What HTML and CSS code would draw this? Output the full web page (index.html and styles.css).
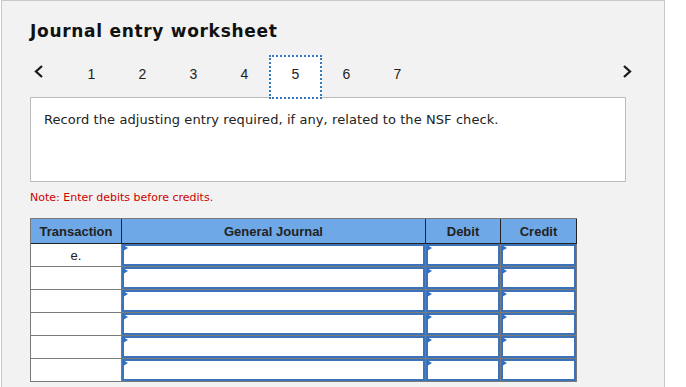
FILE: index.html
```html
<!DOCTYPE html>
<html lang="en">

<head>
    <meta charset="UTF-8">
    <title>Journal entry worksheet</title>
    <link rel="stylesheet" href="styles.css">
</head>

<body>

    <div class="panel">
        <h2 class="title">Journal entry worksheet</h2>

        <div class="nav">
            <span class="arrow prev">
                <svg width="10" height="13" viewBox="0 0 10 13"><polyline points="8,1 2,6.5 8,12" fill="none" stroke="#1a1a1a" stroke-width="2.3"/></svg>
            </span>
            <span class="tab">1</span>
            <span class="tab">2</span>
            <span class="tab">3</span>
            <span class="tab">4</span>
            <span class="tab active">5</span>
            <span class="tab">6</span>
            <span class="tab">7</span>
            <span class="arrow next">
                <svg width="10" height="13" viewBox="0 0 10 13"><polyline points="2,1 8,6.5 2,12" fill="none" stroke="#1a1a1a" stroke-width="2.3"/></svg>
            </span>
        </div>

        <div class="question">
            Record the adjusting entry required, if any, related to the NSF check.
        </div>

        <div class="note">Note: Enter debits before credits.</div>

        <table class="journal">
            <thead>
                <tr>
                    <th class="col-trans">Transaction</th>
                    <th class="col-gj">General Journal</th>
                    <th class="col-num">Debit</th>
                    <th class="col-num2">Credit</th>
                </tr>
            </thead>
            <tbody id="rows"></tbody>
        </table>
    </div>

    <script>
        const rows = ['e.', '', '', '', '', ''];
        const body = document.getElementById('rows');

        rows.forEach(label => {
            const tr = document.createElement('tr');
            tr.innerHTML = `
                <td class="trans">${label}</td>
                <td class="entry"><div class="field"></div><span class="marker"></span></td>
                <td class="entry"><div class="field"></div><span class="marker"></span></td>
                <td class="entry"><div class="field"></div><span class="marker"></span></td>
            `;
            body.appendChild(tr);
        });
    </script>

</body>

</html>
```

FILE: styles.css
```css
html, body {
    margin: 0;
    overflow: hidden;
    background: #fff;
}

.panel {
    margin-left: 1px;
    width: 596px;
    height: 366px;
    padding: 20px 38px 0 28px;
    background: #f2f2f2;
    border: 1px solid #c9c9c9;
    border-bottom: none;
}

.title {
    margin: 0;
    font-family: "DejaVu Sans", Verdana, sans-serif;
    font-size: 17px;
    line-height: 21px;
    letter-spacing: 0.7px;
    font-weight: bold;
    color: #111;
}

/* Step navigation */
.nav {
    display: flex;
    align-items: flex-start;
    height: 44px;
    margin-top: 13px;
    margin-bottom: -2px;
}

.arrow {
    display: flex;
    height: 44px;
    padding-top: 10px;
    box-sizing: border-box;
}

.prev {
    width: 36px;
    padding-left: 4px;
}

.next {
    margin-left: auto;
    margin-right: -6px;
}

.tab {
    width: 51px;
    height: 44px;
    box-sizing: border-box;
    border: 2px solid transparent;
    padding-top: 9px;
    text-align: center;
    font-family: "Liberation Sans", Arial, sans-serif;
    font-size: 14px;
    line-height: 16px;
    color: #222;
}

.tab.active {
    position: relative;
    width: 53px;
    margin: 0 -1px;
    background: #fff;
    border: 2px dotted #3a74c4;
}

/* Question box */
.question {
    height: 69px;
    padding: 14px 13px 0 13px;
    background: #fff;
    border: 1px solid #bdbdbd;
    font-family: "DejaVu Sans", Verdana, sans-serif;
    font-size: 13px;
    line-height: 16px;
    letter-spacing: 0.08px;
    color: #222;
}

.note {
    margin-top: 9px;
    font-family: "DejaVu Sans", Verdana, sans-serif;
    font-size: 11px;
    line-height: 14px;
    color: #cc0000;
}

/* Journal table */
.journal {
    margin-top: 13px;
    border-collapse: separate;
    border-spacing: 0;
    border-top: 1px solid #7a7a7a;
    border-left: 1px solid #7a7a7a;
    font-family: "Liberation Sans", Arial, sans-serif;
    font-size: 13px;
}

.journal th {
    height: 24px;
    padding: 0;
    background: #6ea8e7;
    border-right: 1px solid #222;
    border-bottom: 1px solid #222;
    font-weight: bold;
    color: #222;
    text-align: center;
}

.col-trans { width: 90px; }
.col-gj { width: 303px; }
.col-num { width: 74px; }
.col-num2 { width: 75px; }

.journal td {
    height: 22px;
    padding: 0;
    background: #fff;
    border-right: 1px solid #7a7a7a;
    border-bottom: 1px solid #7a7a7a;
}

.trans {
    text-align: center;
    color: #222;
}

.entry {
    position: relative;
}

.field {
    height: 22px;
    box-sizing: border-box;
    border: 2px solid #3b73bb;
}

.marker {
    position: absolute;
    top: 1px;
    left: 1px;
    width: 0;
    height: 0;
    border-top: 3px solid transparent;
    border-bottom: 3px solid transparent;
    border-left: 5px solid #2f6fc6;
}
```
